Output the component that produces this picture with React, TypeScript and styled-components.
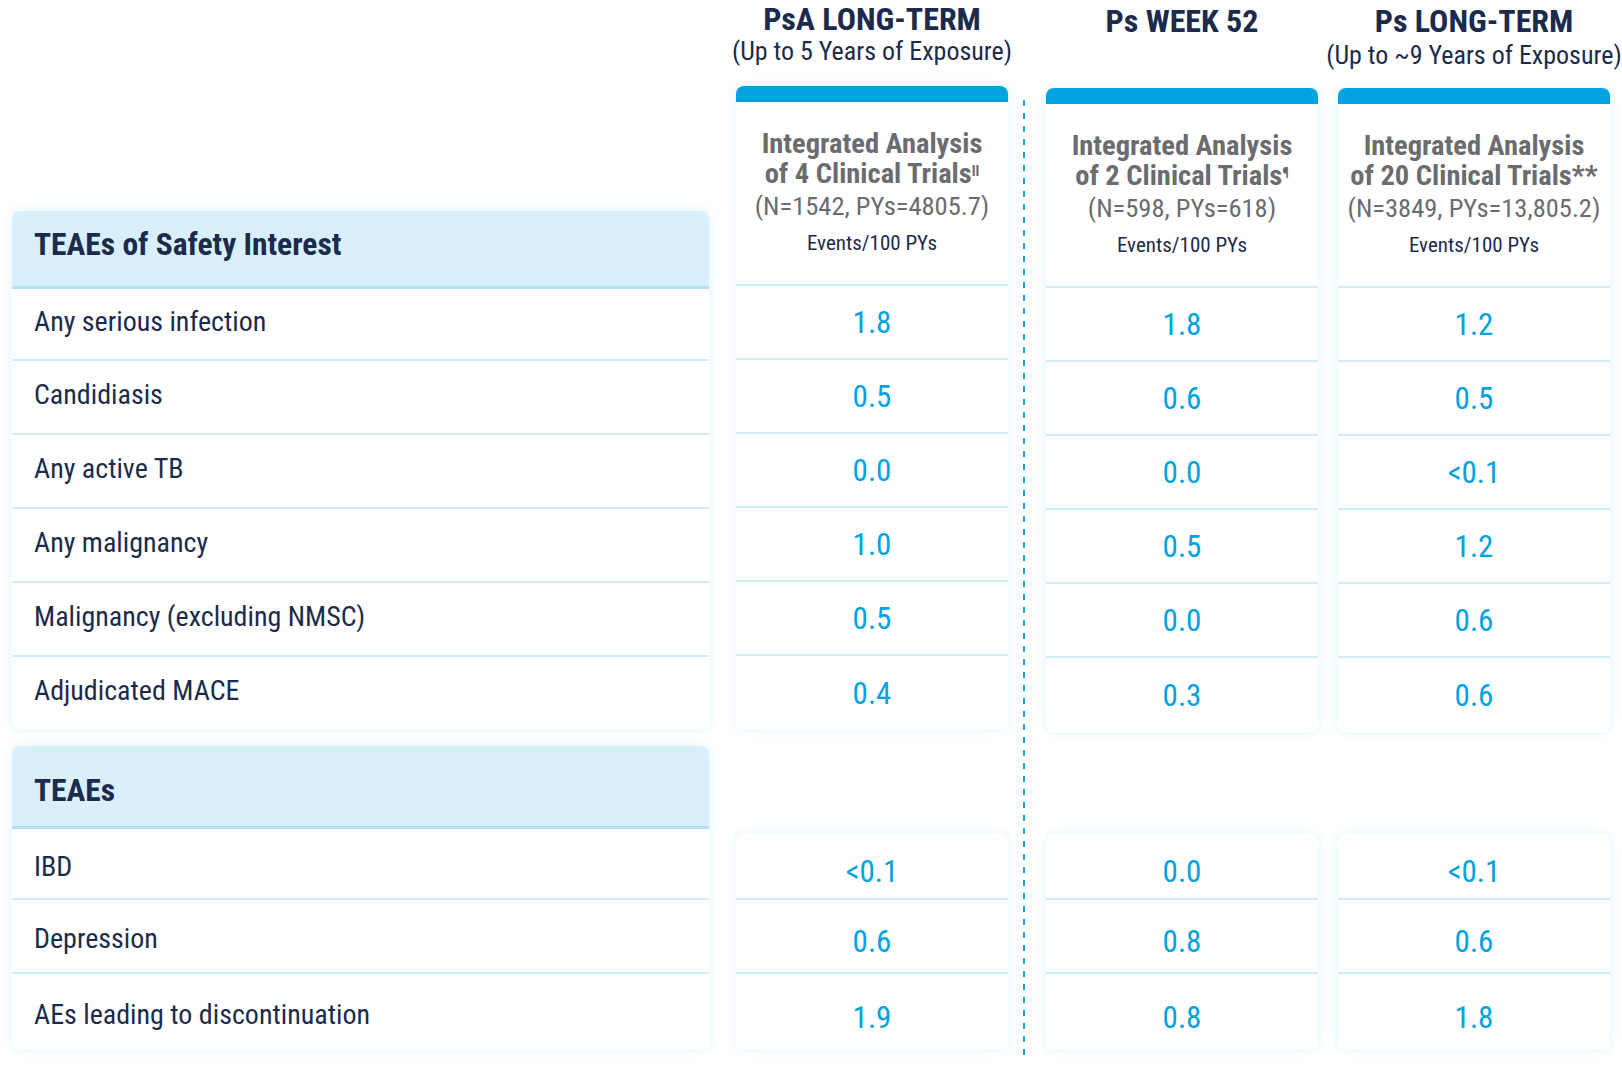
import React from "react";
import styled, { createGlobalStyle } from "styled-components";

const GlobalStyle = createGlobalStyle`
  body {
    margin: 0;
    background: #ffffff;
    font-family: Roboto, "Noto Sans", "Open Sans", sans-serif;
    font-stretch: 75%;
    color: #1c2b4b;
  }
`;

const Page = styled.div`
  display: flex;
  align-items: flex-start;
  padding: 0 12px;
  width: 1622px;
  height: 1066px;
  box-sizing: border-box;
  overflow: hidden;
`;

const LabelColumn = styled.div`
  width: 697px;
  padding-top: 211px;
  display: flex;
  flex-direction: column;
  gap: 17px;
  margin-right: 27px;
`;

const Card = styled.div`
  background: #ffffff;
  border-radius: 8px;
  box-shadow: 0 0 12px rgba(0, 160, 224, 0.13);
  overflow: hidden;
`;

const LabelHead = styled.div<{ $h: number; $shift: number }>`
  height: ${(p) => p.$h}px;
  box-sizing: border-box;
  background: #d9f0fa;
  border-bottom: 3px solid #b4e0f3;
  display: flex;
  align-items: center;
  padding-left: 22px;
  padding-top: ${(p) => Math.max(p.$shift, 0)}px;
  padding-bottom: ${(p) => Math.max(-p.$shift, 0)}px;
  font-size: 31.5px;
  font-weight: 700;
  color: #1c2b4b;
`;

const LabelRow = styled.div<{ $h: number; $shift: number }>`
  height: ${(p) => p.$h}px;
  box-sizing: border-box;
  display: flex;
  align-items: center;
  padding-left: 22px;
  padding-top: ${(p) => Math.max(p.$shift, 0)}px;
  padding-bottom: ${(p) => Math.max(-p.$shift, 0)}px;
  font-size: 28px;
  color: #1c2b4b;
  border-bottom: 2px solid #d0eaf6;
  &:last-child {
    border-bottom: none;
  }
`;

const DataColumn = styled.div<{ $gapRight: number }>`
  width: 272px;
  display: flex;
  flex-direction: column;
  margin-right: ${(p) => p.$gapRight}px;
`;

const Heading = styled.div<{ $h: number; $top: number }>`
  height: ${(p) => p.$h}px;
  box-sizing: border-box;
  padding-top: ${(p) => p.$top}px;
  display: flex;
  flex-direction: column;
  align-items: center;
  white-space: nowrap;
`;

const Title = styled.div`
  font-size: 32px;
  font-weight: 700;
  line-height: 36px;
  color: #1c2b4b;
`;

const Subtitle = styled.div<{ $shift: number }>`
  font-size: 26px;
  line-height: 28px;
  margin-top: ${(p) => p.$shift}px;
  color: #1c2b4b;
`;

const Bar = styled.div`
  height: 16px;
  background: #00a3e0;
`;

const CardHead = styled.div`
  height: 184px;
  box-sizing: border-box;
  border-bottom: 2px solid #d0eaf6;
  display: flex;
  flex-direction: column;
  align-items: center;
  text-align: center;
  white-space: nowrap;
  padding-top: 27px;
`;

const Study = styled.div`
  font-size: 28.5px;
  font-weight: 700;
  line-height: 30px;
  color: #6b6c6f;
  sup {
    font-size: 15px;
    line-height: 0;
    vertical-align: 7px;
  }
`;

const Stats = styled.div`
  font-size: 26.5px;
  line-height: 30px;
  color: #6b6c6f;
  margin-top: 2px;
`;

const Unit = styled.div`
  font-size: 21px;
  line-height: 24px;
  color: #1c2b4b;
  margin-top: 10px;
`;

const ValueRow = styled.div<{ $h: number; $shift: number }>`
  height: ${(p) => p.$h}px;
  box-sizing: border-box;
  display: flex;
  align-items: center;
  justify-content: center;
  padding-top: ${(p) => p.$shift}px;
  font-size: 31px;
  color: #00a3e0;
  border-bottom: 2px solid #d0eaf6;
  &:last-child {
    border-bottom: none;
  }
`;

const Spacer = styled.div<{ $h: number }>`
  height: ${(p) => p.$h}px;
  flex: none;
`;

const Divider = styled.div`
  width: 2px;
  height: 957px;
  margin: 100px 21px 0 15px;
  flex: none;
  background: repeating-linear-gradient(
    to bottom,
    #1aa3dc 0 6px,
    transparent 6px 13px
  );
`;

const safetyRows = [
  "Any serious infection",
  "Candidiasis",
  "Any active TB",
  "Any malignancy",
  "Malignancy (excluding NMSC)",
  "Adjudicated MACE",
];

const teaeRows = ["IBD", "Depression", "AEs leading to discontinuation"];

type Column = {
  title: string;
  subtitle?: string;
  subShift: number;
  titleTop: number;
  headH: number;
  trials: React.ReactNode;
  stats: string;
  safety: string[];
  teaes: string[];
};

const columns: Column[] = [
  {
    title: "PsA LONG-TERM",
    subtitle: "(Up to 5 Years of Exposure)",
    subShift: 0,
    titleTop: 1,
    headH: 86,
    trials: (
      <>
        of 4 Clinical Trials<sup>ll</sup>
      </>
    ),
    stats: "(N=1542, PYs=4805.7)",
    safety: ["1.8", "0.5", "0.0", "1.0", "0.5", "0.4"],
    teaes: ["<0.1", "0.6", "1.9"],
  },
  {
    title: "Ps WEEK 52",
    subShift: 0,
    titleTop: 3,
    headH: 88,
    trials: (
      <>
        of 2 Clinical Trials<sup>¶</sup>
      </>
    ),
    stats: "(N=598, PYs=618)",
    safety: ["1.8", "0.6", "0.0", "0.5", "0.0", "0.3"],
    teaes: ["0.0", "0.8", "0.8"],
  },
  {
    title: "Ps LONG-TERM",
    subtitle: "(Up to ~9 Years of Exposure)",
    subShift: 2,
    titleTop: 3,
    headH: 88,
    trials: <>of 20 Clinical Trials**</>,
    stats: "(N=3849, PYs=13,805.2)",
    safety: ["1.2", "0.5", "<0.1", "1.2", "0.6", "0.6"],
    teaes: ["<0.1", "0.6", "1.8"],
  },
];

const teaeValueHeights = [66, 74, 76];

function DataCol({ col, gapRight }: { col: Column; gapRight: number }) {
  return (
    <DataColumn $gapRight={gapRight}>
      <Heading $h={col.headH} $top={col.titleTop}>
        <Title>{col.title}</Title>
        {col.subtitle && <Subtitle $shift={col.subShift}>{col.subtitle}</Subtitle>}
      </Heading>
      <Card>
        <Bar />
        <CardHead>
          <Study>
            Integrated Analysis
            <br />
            {col.trials}
          </Study>
          <Stats>{col.stats}</Stats>
          <Unit>Events/100 PYs</Unit>
        </CardHead>
        {col.safety.map((v, i) => (
          <ValueRow key={i} $h={74} $shift={0}>
            {v}
          </ValueRow>
        ))}
      </Card>
      <Spacer $h={834 - 86 - 16 - 184 - 444 - (col.headH - 86)} />
      <Card>
        {col.teaes.map((v, i) => (
          <ValueRow key={i} $h={teaeValueHeights[i]} $shift={11}>
            {v}
          </ValueRow>
        ))}
      </Card>
    </DataColumn>
  );
}

export default function App() {
  const safetyHeights = [72, 74, 74, 74, 74, 72];
  const teaeHeights = [71, 74, 76];
  return (
    <>
      <GlobalStyle />
      <Page>
        <LabelColumn>
          <Card>
            <LabelHead $h={78} $shift={-9}>
              TEAEs of Safety Interest
            </LabelHead>
            {safetyRows.map((r, i) => (
              <LabelRow key={r} $h={safetyHeights[i]} $shift={-6}>
                {r}
              </LabelRow>
            ))}
          </Card>
          <Card>
            <LabelHead $h={83} $shift={8}>
              TEAEs
            </LabelHead>
            {teaeRows.map((r, i) => (
              <LabelRow key={r} $h={teaeHeights[i]} $shift={5}>
                {r}
              </LabelRow>
            ))}
          </Card>
        </LabelColumn>
        <DataCol col={columns[0]} gapRight={0} />
        <Divider />
        <DataCol col={columns[1]} gapRight={20} />
        <DataCol col={columns[2]} gapRight={0} />
      </Page>
    </>
  );
}
